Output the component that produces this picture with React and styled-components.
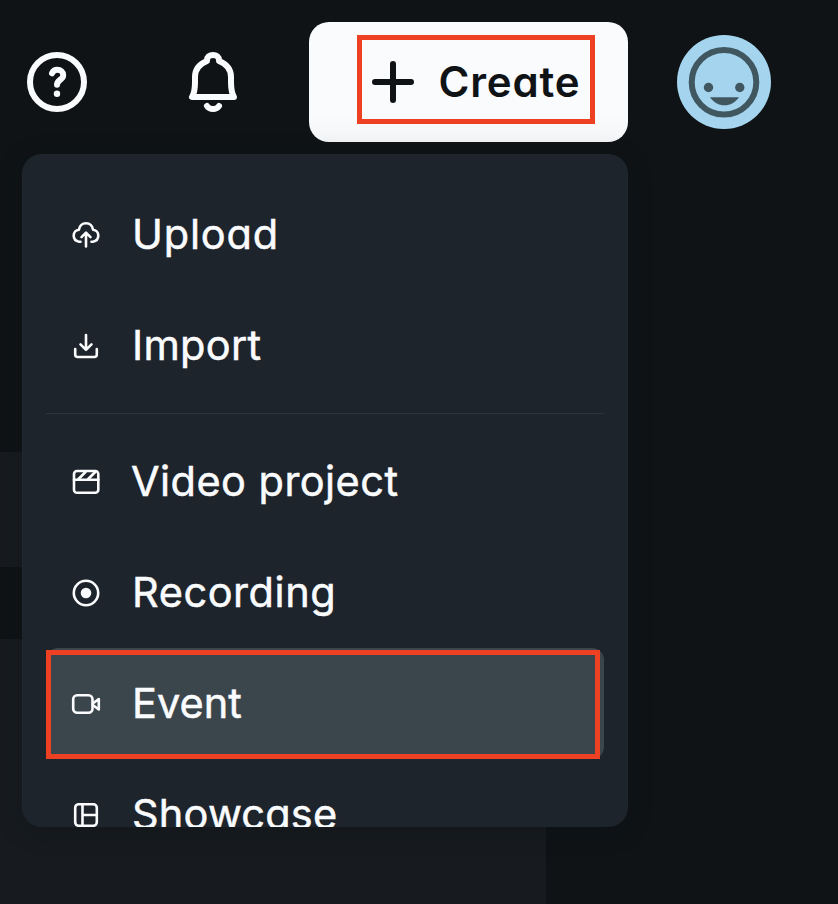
import React from "react";
import styled, { createGlobalStyle } from "styled-components";

const GlobalStyle = createGlobalStyle`
  *, *::before, *::after { box-sizing: border-box; }
  body {
    margin: 0;
    background: #0f1316;
    overflow: hidden;
    font-family: Inter, "Liberation Sans", sans-serif;
    font-feature-settings: "cv11" 1;
  }
`;

const Page = styled.div`
  position: relative;
  width: 838px;
  height: 904px;
  overflow: hidden;
  background: #0f1316;
`;

const Header = styled.header`
  display: flex;
  align-items: center;
  height: 164px;
  padding-left: 27px;
`;

const IconButton = styled.button`
  display: flex;
  width: 60px;
  height: 60px;
  margin: 0 ${(p) => p.$gap}px 0 0;
  padding: 0;
  border: 0;
  background: none;
  color: #fafbfd;
`;

const CreateButton = styled.button`
  display: flex;
  align-items: center;
  justify-content: flex-end;
  width: 319px;
  height: 120px;
  margin: 0 49px 0 0;
  padding: 0 33px 0 0;
  border: 0;
  border-radius: 20px;
  background: linear-gradient(#fafbfd 75%, #f5f6f8);
`;

const CreateHighlight = styled.span`
  display: flex;
  align-items: center;
  width: 238px;
  height: 89px;
  margin-top: -6px;
  padding: 5px 0 0 10px;
  border: 5px solid #ee4023;
  color: #0f1316;
`;

const CreateLabel = styled.span`
  margin-left: 24.5px;
  font-family: Inter, sans-serif;
  font-feature-settings: "cv11" 1;
  font-size: 42px;
  font-weight: 600;
  line-height: 50px;
  letter-spacing: ${(p) => p.$tracking}px;
  white-space: nowrap;
`;

const Avatar = styled.div`
  display: flex;
  width: 94px;
  height: 94px;
`;

const Content = styled.main`
  display: flex;
  flex-direction: column;
  gap: 72px;
  width: 546px;
  padding-top: 288px;
`;

const Panel = styled.section`
  height: ${(p) => p.$height}px;
  background: #171b1f;
`;

const Menu = styled.nav`
  position: absolute;
  top: 154px;
  left: 22px;
  width: 606px;
  height: 673px;
  padding: 24px 23px 0 23px;
  border: 1px solid #1f272e;
  border-bottom: 0;
  border-radius: 20px;
  overflow: hidden;
  background: #1e242c;
`;

const MenuShadow = styled.div`
  position: absolute;
  top: 154px;
  left: 22px;
  width: 606px;
  height: 673px;
  border-radius: 20px;
  box-shadow: 0 4px 24px rgba(10, 16, 20, 0.3);
`;

const MenuItem = styled.div`
  position: relative;
  display: flex;
  align-items: center;
  height: 111px;
  padding-left: 25px;
  border-radius: 12px;
  background: ${(p) => (p.$active ? "#3b454c" : "transparent")};
  color: #fafbfd;
`;

const MenuLabel = styled.span`
  margin: -1px 0 0 ${(p) => p.$offset}px;
  font-size: 41.5px;
  font-weight: 400;
  -webkit-text-stroke: 0.5px currentColor;
  line-height: 50px;
  letter-spacing: ${(p) => p.$tracking}px;
  white-space: nowrap;
`;

const Divider = styled.hr`
  height: 1px;
  margin: 12px 0;
  border: 0;
  background: #2d353c;
`;

const EventHighlight = styled.div`
  position: absolute;
  top: 2px;
  left: 0;
  width: 554px;
  height: 109px;
  border: 5px solid #ee4023;
`;

const Glyph = styled.svg`
  display: block;
  flex: none;
  fill: none;
  stroke: currentColor;
  stroke-width: ${(p) => p.$weight || 2.6};
  stroke-linecap: round;
  stroke-linejoin: round;
`;

const HelpIcon = () => (
  <Glyph width="60" height="60" viewBox="0 0 60 60" $weight={6}>
    <circle cx="30" cy="30" r="27" />
    <path d="M25 21.300C26 19 28 17.800 30.200 17.800C33.600 17.800 36.200 20 36.200 23.200C36.200 28 30 27.500 30 32.800" />
    <circle cx="30" cy="41.800" r="3.2" fill="currentColor" stroke="none" />
  </Glyph>
);

const BellIcon = () => (
  <Glyph width="60" height="60" viewBox="183 52 60 60" $weight={6}>
    <path d="M192 97H234C231.5 93 231 88 231 82V77C231 69.5 226.5 64 219 61V60C219 57 216.5 55 213 55S207 57 207 60V61C199.500 64 195 69.500 195 77V82C195 88 194.500 93 192 97Z" />
    <path d="M207 106C209.500 110 216.500 110 219 106" />
  </Glyph>
);

const PlusIcon = () => (
  <Glyph width="42" height="42" viewBox="0 0 42 42" $weight={6}>
    <path d="M3 21H39M21 3V39" />
  </Glyph>
);

const Smiley = () => (
  <svg width="94" height="94" viewBox="0 0 94 94">
    <circle cx="47" cy="47" r="47" fill="#a5d5ee" />
    <circle cx="47" cy="47.300" r="32.300" fill="none" stroke="#405760" strokeWidth="6" />
    <circle cx="31.500" cy="52.500" r="4.700" fill="#405760" />
    <circle cx="62.800" cy="52.500" r="4.700" fill="#405760" />
    <path d="M33 62.200H62C58 67.800 53.500 70.200 47.500 70.200S37 67.800 33 62.200Z" fill="#405760" />
  </svg>
);

const shapes = {
  upload: (
    <path d="M8.500 20.700H7C3.800 20.200 1.700 17.700 1.700 14.600C1.700 11.500 3.800 9 6.900 8.700C7.700 4.500 10.400 2.200 14 2.200S20.300 4.500 21.100 8.700C24.200 9 26.300 11.500 26.300 14.600C26.300 17.700 24.200 20.200 21 20.700H19.500M14 25.500V12M9.500 16.200L14 11.700L18.500 16.200" />
  ),
  import: (
    <path d="M14 3V17.800M8.500 12.300L14 17.800L19.500 12.300M3.200 17V22.500Q3.200 25 5.700 25H22.300Q24.800 25 24.800 22.500V17" />
  ),
  project: (
    <>
      <rect x="2" y="3" width="24.300" height="21.700" rx="3" />
      <path d="M2 11.700H26.300" />
      <path d="M6.500 11L13.500 4M16.200 11L23.200 4" />
    </>
  ),
  recording: (
    <>
      <circle cx="14" cy="14" r="12.200" />
      <circle cx="14" cy="14" r="5.300" fill="currentColor" stroke="none" />
    </>
  ),
  event: (
    <>
      <rect x="1.200" y="5.200" width="19.300" height="17.600" rx="4" />
      <path d="M20.800 13.500L26.800 9V19.500L20.800 15Z" />
    </>
  ),
  showcase: (
    <>
      <rect x="3.200" y="3.200" width="21.600" height="21.600" rx="3.500" />
      <path d="M10.500 3.200V24.800M10.500 14H24.800" />
    </>
  ),
};

const creation = [
  { name: "Upload", shape: "upload", tracking: 0.8, offset: 29 },
  { name: "Import", shape: "import", tracking: 0.3, offset: 29 },
];

const projects = [
  { name: "Video project", shape: "project", tracking: 0.45, offset: 28 },
  { name: "Recording", shape: "recording", tracking: 0.55, offset: 29 },
  { name: "Event", shape: "event", tracking: 0, offset: 29, active: true },
  { name: "Showcase", shape: "showcase", tracking: 0.2, offset: 29 },
];

const Entry = ({ item }) => (
  <MenuItem $active={item.active}>
    <Glyph width="32" height="28" viewBox="-1 0 32 28">
      {shapes[item.shape]}
    </Glyph>
    <MenuLabel $tracking={item.tracking} $offset={item.offset}>
      {item.name}
    </MenuLabel>
    {item.active && <EventHighlight />}
  </MenuItem>
);

export default function App() {
  return (
    <>
      <GlobalStyle />
      <Page>
        <Header>
          <IconButton $gap={96} aria-label="Help">
            <HelpIcon />
          </IconButton>
          <IconButton $gap={66} aria-label="Notifications">
            <BellIcon />
          </IconButton>
          <CreateButton>
            <CreateHighlight>
              <PlusIcon />
              <CreateLabel $tracking={0.8}>Create</CreateLabel>
            </CreateHighlight>
          </CreateButton>
          <Avatar>
            <Smiley />
          </Avatar>
        </Header>
        <Content>
          <Panel $height={115} />
          <Panel $height={265} />
        </Content>
        <MenuShadow />
        <Menu>
          {creation.map((item) => (
            <Entry key={item.name} item={item} />
          ))}
          <Divider />
          {projects.map((item) => (
            <Entry key={item.name} item={item} />
          ))}
        </Menu>
      </Page>
    </>
  );
}
